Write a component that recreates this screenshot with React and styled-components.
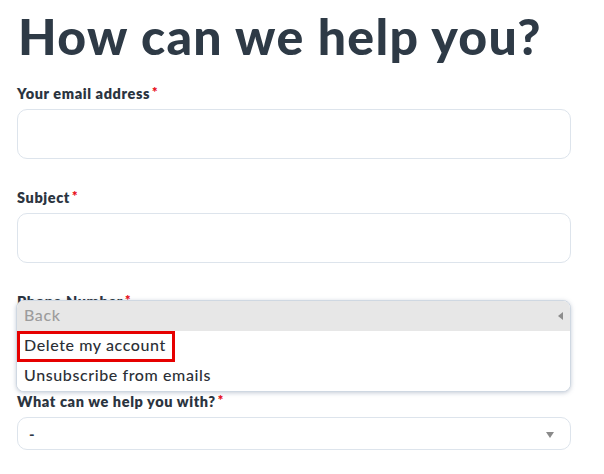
import React from "react";
import styled, { createGlobalStyle } from "styled-components";

const Global = createGlobalStyle`
  html, body { margin: 0; padding: 0; background: #fff; }
  body { font-family: Lato, "Open Sans", sans-serif; color: #2e3a46; }
`;

const Page = styled.div`
  width: 604px;
  height: 474px;
  overflow: hidden;
  position: relative;
  padding: 8px 33px 0 17px;
  box-sizing: border-box;
`;

const Title = styled.h1`
  margin: 0 0 0 1px;
  font-size: 50px;
  line-height: 56px;
  font-weight: 900;
  letter-spacing: 1.3px;
  color: #2e3a46;
`;

const Form = styled.form`
  margin-top: 19px;
  display: flex;
  flex-direction: column;
`;

const Field = styled.div`
  position: relative;
  display: flex;
  flex-direction: column;
  margin-bottom: ${(p) => p.$mb || 28}px;
`;

const Label = styled.label`
  font-size: 14.5px;
  line-height: 18px;
  font-weight: 800;
  letter-spacing: 0.6px;
  color: #2b3440;
  margin-bottom: 6px;
`;

const Req = styled.span`
  color: #e8101c;
  margin-left: 2px;
  font-size: 13px;
  vertical-align: 2px;
`;

const Input = styled.div`
  height: 50px;
  box-sizing: border-box;
  border: 1px solid #dde4ec;
  border-radius: 10px;
  background: #fff;
`;

const Select = styled.div`
  height: 33px;
  box-sizing: border-box;
  border: 1px solid #dde4ec;
  border-radius: 10px;
  background: #fff;
  display: flex;
  align-items: center;
  justify-content: space-between;
  padding: 0 16px 0 11px;
  font-size: 15px;
  font-weight: 700;
  color: #2e3a46;
`;

const Caret = styled.span`
  width: 0;
  height: 0;
  border-left: 4px solid transparent;
  border-right: 4px solid transparent;
  border-top: 6px solid #8a8a8a;
  margin-top: 2px;
`;

const Menu = styled.div`
  position: absolute;
  left: -1px;
  top: 9px;
  width: 555px;
  box-sizing: border-box;
  border: 1px solid #cfd8e2;
  border-radius: 8px;
  background: #fff;
  overflow: hidden;
  box-shadow: 0 1px 4px rgba(90, 110, 140, 0.35);
  z-index: 2;
`;

const Option = styled.div`
  height: 30px;
  box-sizing: border-box;
  display: flex;
  align-items: center;
  justify-content: space-between;
  padding: 0 7px 3px ${(p) => (p.$boxed ? 0 : 7)}px;
  font-size: 16px;
  font-weight: 500;
  letter-spacing: 0.6px;
  background: ${(p) => (p.$muted ? "#e7e7e7" : "#fff")};
  color: ${(p) => (p.$muted ? "#9c9c9c" : "#2b2f36")};
`;

const Boxed = styled.span`
  height: 31px;
  box-sizing: border-box;
  display: flex;
  align-items: center;
  padding: 0 6px 3px 4px;
  border: 3px solid #e60000;
  margin-top: 3px;
`;

const LeftCaret = styled.span`
  width: 0;
  height: 0;
  border-top: 4px solid transparent;
  border-bottom: 4px solid transparent;
  border-right: 5px solid #8c8c8c;
  margin-top: 3px;
`;

export default function App() {
  return (
    <>
      <Global />
      <Page>
        <Title>How can we help you?</Title>
        <Form onSubmit={(e) => e.preventDefault()}>
          <Field>
            <Label>
              Your email address<Req>*</Req>
            </Label>
            <Input />
          </Field>
          <Field>
            <Label>
              Subject<Req>*</Req>
            </Label>
            <Input />
          </Field>
          <Field $mb={24}>
            <Label>
              Phone Number<Req>*</Req>
            </Label>
            <Input />
            <Menu>
              <Option $muted>
                Back
                <LeftCaret />
              </Option>
              <Option $boxed>
                <Boxed>Delete my account</Boxed>
              </Option>
              <Option>Unsubscribe from emails</Option>
            </Menu>
          </Field>
          <Field>
            <Label>
              What can we help you with?<Req>*</Req>
            </Label>
            <Select>
              -
              <Caret />
            </Select>
          </Field>
        </Form>
      </Page>
    </>
  );
}
